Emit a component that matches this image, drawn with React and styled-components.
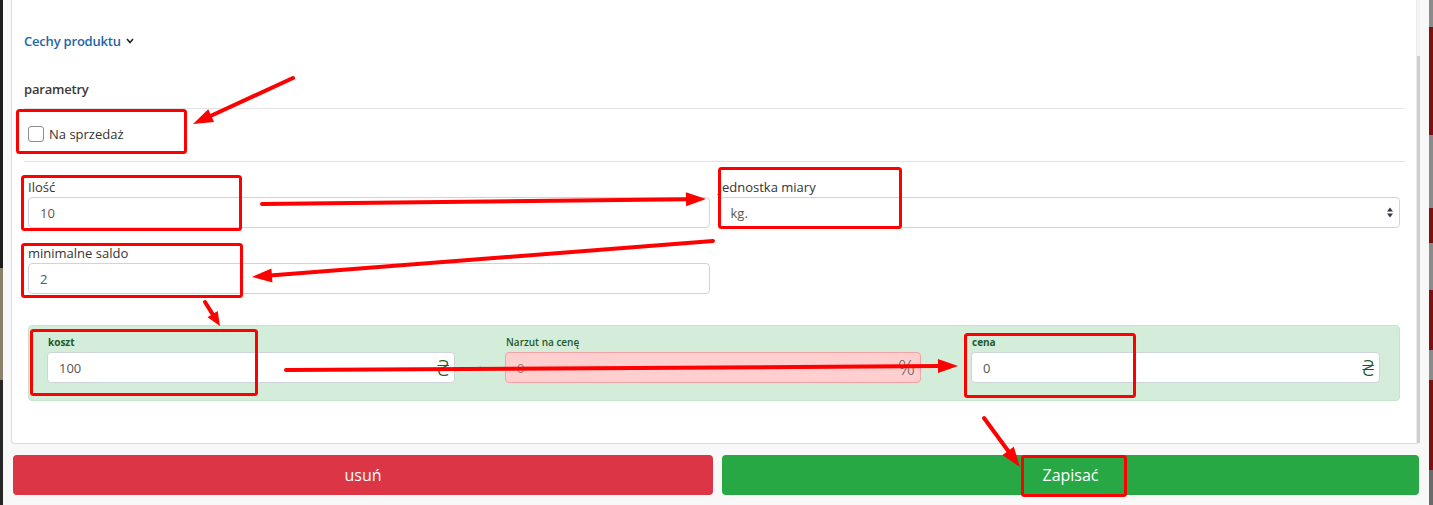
import styled, { createGlobalStyle } from 'styled-components';

const GlobalStyle = createGlobalStyle`
  html, body {
    margin: 0;
    padding: 0;
  }
  body {
    background: #1f1f1f;
    font-family: 'Open Sans', 'Noto Sans', sans-serif;
    font-size: 13px;
    color: #333;
  }
`;

const Screen = styled.div`
  position: relative;
  width: 1433px;
  height: 505px;
  overflow: hidden;
  display: flex;
`;

const LeftEdge = styled.div`
  width: 3px;
  background: linear-gradient(
    to bottom,
    #1d1d1d 0,
    #1d1d1d 268px,
    #8a7f69 268px,
    #8a7f69 380px,
    #262626 380px
  );
`;

const RightEdge = styled.div`
  width: 4px;
  background: linear-gradient(
    to bottom,
    #8b8b8b 0,
    #8b8b8b 27px,
    #7a1111 27px,
    #7a1111 135px,
    #8b8b8b 135px,
    #8b8b8b 208px,
    #7a1111 208px,
    #7a1111 243px,
    #8b8b8b 243px,
    #8b8b8b 290px,
    #7a1111 290px,
    #7a1111 350px,
    #8b8b8b 350px,
    #8b8b8b 380px,
    #7a1111 380px,
    #7a1111 470px,
    #6a6a6a 470px
  );
`;

const Modal = styled.div`
  flex: 1;
  background: #f8f8f8;
  display: flex;
  flex-direction: column;
  padding: 0 9px 0 8px;
`;

const Card = styled.div`
  height: 444px;
  box-sizing: border-box;
  display: flex;
  background: #fff;
  border: 1px solid #dcdcdc;
  border-top: none;
  border-right: none;
  border-radius: 0 0 4px 4px;
`;

const Body = styled.div`
  flex: 1;
  padding: 0 11px 0 12px;
`;

const Scrollbar = styled.div`
  width: 4px;
  display: flex;
  flex-direction: column;
  background: #f3f3f3;
  border-left: 1px solid #ececec;
  box-sizing: border-box;
`;

const ScrollThumb = styled.div`
  flex: 1;
  margin-top: 56px;
  background: #cdcdcd;
`;

const Toggle = styled.div`
  margin-top: 33px;
  display: flex;
  align-items: center;
  gap: 5px;
  color: #1f66a3;
  font-size: 13px;
  line-height: 16px;
  font-weight: 600;
  letter-spacing: -0.2px;
`;

const SectionTitle = styled.div`
  margin-top: 32px;
  font-size: 13px;
  line-height: 16px;
  font-weight: 600;
  letter-spacing: -0.2px;
  color: #3a3a3a;
`;

const Divider = styled.div`
  height: 1px;
  background: #e4e4e4;
  margin-top: ${({ $top }) => $top || 0}px;
`;

const CheckRow = styled.label`
  display: flex;
  align-items: center;
  gap: 5px;
  height: 52px;
  box-sizing: border-box;
  padding: 0 0 3px 4px;
  font-size: 13px;
  color: #333;
`;

const CheckBox = styled.span`
  width: 16px;
  height: 16px;
  box-sizing: border-box;
  border: 1px solid #8d8d8d;
  border-radius: 3px;
  background: #fff;
`;

const Form = styled.div`
  padding: 0 5px 0 4px;
`;

const FieldGrid = styled.div`
  margin-top: 17px;
  display: grid;
  grid-template-columns: 1fr 1fr;
  column-gap: 9px;
  row-gap: 17px;
`;

const Field = styled.div`
  display: flex;
  flex-direction: column;
`;

const Label = styled.div`
  font-size: 13px;
  line-height: 16px;
  color: #333;
  margin-bottom: 2px;
`;

const InputBox = styled.div`
  height: 31px;
  box-sizing: border-box;
  display: flex;
  align-items: center;
  border: 1px solid ${({ $danger }) => ($danger ? '#f3a3a6' : '#ced4da')};
  border-radius: 4px;
  background: ${({ $danger }) => ($danger ? '#ffcfd0' : '#fff')};
  padding: 0 5px 0 11px;
`;

const Input = styled.input`
  flex: 1;
  min-width: 0;
  border: none;
  outline: none;
  background: transparent;
  padding: 0;
  font-family: inherit;
  font-size: 13px;
  color: ${({ $muted }) => ($muted ? '#8a7f7f' : '#555')};
`;

const Suffix = styled.span`
  font-family: ${({ $dark }) => ($dark ? "'Open Sans'" : "'Noto Sans', 'DejaVu Sans'")}, sans-serif;
  font-size: ${({ $dark }) => ($dark ? 21 : 22)}px;
  line-height: 29px;
  font-weight: 300;
  color: ${({ $dark }) => ($dark ? '#5a5a5a' : '#1c5b2b')};
`;

const PricePanel = styled.div`
  margin-top: 31px;
  box-sizing: border-box;
  background: #d4edda;
  border: 1px solid #c3e6cb;
  border-radius: 4px;
  padding: 10px 19px 17px 18px;
  display: grid;
  grid-template-columns: 408fr 50px 416fr 50px 409fr;
  align-items: end;
`;

const PanelLabel = styled.div`
  font-size: 10px;
  line-height: 13px;
  font-weight: ${({ $bold }) => ($bold ? 700 : 600)};
  color: #1c5a2b;
  margin-bottom: 3px;
  padding-left: 1px;
`;

const Operator = styled.div`
  height: 31px;
  display: flex;
  align-items: center;
  justify-content: center;
  color: #9aa59c;
  font-size: 10px;
`;

const Actions = styled.div`
  margin-top: 11px;
  padding: 0 1px 0 2px;
  display: grid;
  grid-template-columns: 700px 1fr;
  column-gap: 9px;
`;

const Button = styled.button`
  height: 40px;
  border: none;
  border-radius: 4px;
  background: ${({ $variant }) => ($variant === 'danger' ? '#dc3545' : '#28a745')};
  color: #fff;
  font-family: inherit;
  font-size: 16px;
`;

const Overlay = styled.svg`
  position: absolute;
  left: 0;
  top: 0;
  pointer-events: none;
`;

function Chevron() {
  return (
    <svg width="8" height="6" viewBox="0 0 8 6">
      <polyline points="1,1 4,4.5 7,1" fill="none" stroke="#222" strokeWidth="1.6" />
    </svg>
  );
}

function SelectArrows() {
  return (
    <svg width="8" height="11" viewBox="0 0 8 11">
      <polygon points="4,0.5 7,4.5 1,4.5" fill="#343a40" />
      <polygon points="4,10.5 7,6.5 1,6.5" fill="#343a40" />
    </svg>
  );
}

function Box({ x, y, w, h }) {
  return (
    <rect
      x={x + 1.5}
      y={y + 1.5}
      width={w - 3}
      height={h - 3}
      rx="2"
      fill="none"
      stroke="#ff0000"
      strokeWidth="3"
    />
  );
}

function Arrow({ x1, y1, x2, y2, head = 20, wing = 7 }) {
  const dx = x2 - x1;
  const dy = y2 - y1;
  const len = Math.hypot(dx, dy);
  const ux = dx / len;
  const uy = dy / len;
  const bx = x2 - ux * head;
  const by = y2 - uy * head;
  const px = -uy * wing;
  const py = ux * wing;
  return (
    <g>
      <line x1={x1} y1={y1} x2={bx + ux * 2} y2={by + uy * 2} stroke="#ff0000" strokeWidth="4" strokeLinecap="round" />
      <polygon points={`${x2},${y2} ${bx + px},${by + py} ${bx - px},${by - py}`} fill="#ff0000" />
    </g>
  );
}

function Annotations() {
  return (
    <Overlay width="1433" height="505" viewBox="0 0 1433 505">
      <Box x={16} y={109} w={171} h={45} />
      <Box x={21} y={175} w={221} h={56} />
      <Box x={718} y={167} w={184} h={62} />
      <Box x={21} y={243} w={222} h={55} />
      <Box x={30} y={329} w={228} h={67} />
      <Box x={964} y={333} w={172} h={65} />
      <Box x={1021} y={455} w={106} h={42} />
      <Arrow x1={293} y1={78} x2={193} y2={124} />
      <Arrow x1={262} y1={204} x2={706} y2={199} />
      <Arrow x1={713} y1={241} x2={252} y2={277} />
      <Arrow x1={205} y1={302} x2={220} y2={326} head={14} wing={6} />
      <Arrow x1={286} y1={370} x2={958} y2={366} />
      <Arrow x1={984} y1={418} x2={1020} y2={467} />
    </Overlay>
  );
}

export default function App() {
  return (
    <>
      <GlobalStyle />
      <Screen>
        <LeftEdge />
        <Modal>
          <Card>
            <Body>
              <Toggle>
                Cechy produktu
                <Chevron />
              </Toggle>
              <SectionTitle>parametry</SectionTitle>
              <Divider $top={11} />
              <CheckRow>
                <CheckBox />
                Na sprzedaż
              </CheckRow>
              <Divider />
              <Form>
                <FieldGrid>
                  <Field>
                    <Label>Ilość</Label>
                    <InputBox>
                      <Input readOnly value="10" />
                    </InputBox>
                  </Field>
                  <Field>
                    <Label>Jednostka miary</Label>
                    <InputBox>
                      <Input readOnly value="kg." />
                      <SelectArrows />
                    </InputBox>
                  </Field>
                  <Field>
                    <Label>minimalne saldo</Label>
                    <InputBox>
                      <Input readOnly value="2" />
                    </InputBox>
                  </Field>
                </FieldGrid>
                <PricePanel>
                  <Field>
                    <PanelLabel $bold>koszt</PanelLabel>
                    <InputBox>
                      <Input readOnly value="100" />
                      <Suffix>₴</Suffix>
                    </InputBox>
                  </Field>
                  <Operator>+</Operator>
                  <Field>
                    <PanelLabel>Narzut na cenę</PanelLabel>
                    <InputBox $danger>
                      <Input readOnly value="0" $muted />
                      <Suffix $dark>%</Suffix>
                    </InputBox>
                  </Field>
                  <Operator>=</Operator>
                  <Field>
                    <PanelLabel $bold>cena</PanelLabel>
                    <InputBox>
                      <Input readOnly value="0" />
                      <Suffix>₴</Suffix>
                    </InputBox>
                  </Field>
                </PricePanel>
              </Form>
            </Body>
            <Scrollbar>
              <ScrollThumb />
            </Scrollbar>
          </Card>
          <Actions>
            <Button $variant="danger">usuń</Button>
            <Button $variant="success">Zapisać</Button>
          </Actions>
        </Modal>
        <RightEdge />
        <Annotations />
      </Screen>
    </>
  );
}
